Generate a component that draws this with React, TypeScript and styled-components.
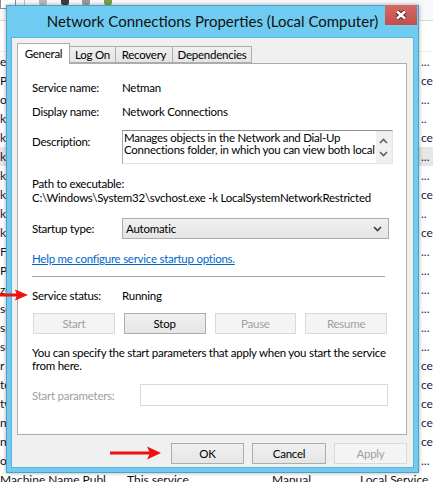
import React from 'react'
import styled, { createGlobalStyle } from 'styled-components'
// ______________________________________________________
//
const uiFont = `Lato, 'Segoe UI', 'Liberation Sans', sans-serif`

const GlobalStyle = createGlobalStyle`
  html, body {
    margin: 0;
    padding: 0;
    background: #ffffff;
  }
  body {
    font-family: ${uiFont};
  }
`
// ______________________________________________________
//
// the services list behind the dialog
type ServiceRow = { name: string; tail: string; color?: string }

const services: ServiceRow[] = [
  { name: 'eventlog', tail: '...' },
  { name: 'Peer Name Resolution', tail: 'ce' },
  { name: 'olicy Agent', tail: '...' },
  { name: 'k Access Protection', tail: '..', color: '#2a1640' },
  { name: 'k Connected Devices', tail: 'ce', color: '#2a1640' },
  { name: 'k Connections', tail: '...', color: '#2a1640' },
  { name: 'k Connectivity', tail: '...', color: '#2a1640' },
  { name: 'k List Service', tail: 'ce', color: '#2a1640' },
  { name: 'k Location Awareness', tail: '..', color: '#2a1640' },
  { name: 'k Store Interface', tail: 'ce', color: '#2a1640' },
  { name: 'Files', tail: '...', color: '#2a1640' },
  { name: 'Plug and Play', tail: '...' },
  { name: 'ze', tail: '...' },
  { name: 'service', tail: '...' },
  { name: 'spooler', tail: '...' },
  { name: 'support', tail: '...' },
  { name: 'r Control Panel', tail: 'ce' },
  { name: 'tection', tail: 'ce' },
  { name: 'tworks', tail: 'ce' },
  { name: 'nistrator', tail: 'ce' },
  { name: 'nistrator Manager', tail: 'ce' },
  { name: 'on Manager', tail: '...' },
]

const Desktop = styled.div`
  position: relative;
  width: 433px;
  height: 482px;
  overflow: hidden;
  background: #ffffff;
  font-size: 11.5px;
  letter-spacing: -0.25px;
  color: #000000;
`

const Toolbar = styled.div`
  display: flex;
  align-items: flex-start;
  height: 20px;
  border-bottom: 1px solid #d9d9d9;
  background: #f7f8f9;
`

const ToolBox = styled.span`
  width: 14px;
  height: 12px;
  margin-top: -5px;
  border: 1px solid #8e8e8e;
  background: #ffffff;
`

const ToolSep = styled.span`
  width: 1px;
  height: 7px;
  margin-left: 8px;
  background: #bcbcbc;
`

const ToolIcon = styled.span<{ $color: string; $left: number }>`
  width: 8px;
  height: 8px;
  margin-top: -3px;
  margin-left: ${p => p.$left}px;
  background: ${p => p.$color};
  border-radius: 2px;
`

const ListHeader = styled.div`
  height: 30px;
  border-bottom: 1px solid #eeeeee;
`

const Row = styled.div<{ $selected?: boolean }>`
  display: grid;
  grid-template-columns: 127px 145px 88px 61px 1fr;
  align-items: center;
  height: 19px;
  white-space: nowrap;
  font-size: 12px;
  letter-spacing: 0;
  background: ${p => (p.$selected ? '#e6e6e6' : 'transparent')};
`

const Cell = styled.span<{ $color?: string }>`
  color: ${p => p.$color || '#111111'};
  line-height: 19px;
`
// ______________________________________________________
//
// dialog frame
const Dialog = styled.div`
  position: absolute;
  top: 5px;
  left: 6px;
  width: 413px;
  height: 468px;
  box-sizing: border-box;
  display: flex;
  flex-direction: column;
  background: #6fccf0;
  border: 1px solid #4f9fc6;
  box-shadow: 0 0 4px rgba(0, 0, 0, 0.35);
`

const TitleBar = styled.div`
  display: grid;
  grid-template-columns: 1fr auto 1fr;
  align-items: start;
  height: 32px;
`

const Title = styled.div`
  grid-column: 2;
  margin-top: 5px;
  font-size: 15px;
  letter-spacing: 0;
  line-height: 20px;
  color: #111111;
  white-space: nowrap;
`

const CloseButton = styled.div`
  grid-column: 3;
  justify-self: end;
  display: flex;
  align-items: center;
  justify-content: center;
  width: 32px;
  height: 20px;
  margin-top: -1px;
  margin-right: 1px;
  background: linear-gradient(#d66a66, #c44d49);
`

const Client = styled.div`
  flex: 1;
  display: flex;
  flex-direction: column;
  margin: 0 5px 5px;
  padding: 5px 6px 0 5px;
  background: #f0f0f0;
  box-shadow: 0 0 0 1px #5db4da;
`
// ______________________________________________________
//
// tabs
const TabStrip = styled.div`
  display: flex;
  align-items: flex-end;
  height: 20px;
  position: relative;
  z-index: 1;
`

const Tab = styled.div<{ $active?: boolean; $width: number }>`
  box-sizing: border-box;
  width: ${p => p.$width}px;
  height: ${p => (p.$active ? 21 : 17)}px;
  margin-bottom: ${p => (p.$active ? -1 : 0)}px;
  margin-left: -1px;
  padding-top: ${p => (p.$active ? 2 : 0)}px;
  border: 1px solid #acacac;
  border-bottom: ${p => (p.$active ? 'none' : '1px solid #acacac')};
  background: ${p => (p.$active ? '#ffffff' : 'linear-gradient(#f0f0f0, #e5e5e5)')};
  text-align: center;
  line-height: 15px;
  color: #000000;
  &:first-child {
    margin-left: 0;
  }
`

const TabPanel = styled.div`
  box-sizing: border-box;
  display: flex;
  flex-direction: column;
  height: 372px;
  padding: 0 18px 0 14px;
  background: #ffffff;
  border: 1px solid #acacac;
`

const FieldRow = styled.div<{ $gap: number; $label?: number; $align?: string }>`
  display: grid;
  grid-template-columns: ${p => p.$label || 90}px 1fr;
  align-items: ${p => p.$align || 'center'};
  margin-top: ${p => p.$gap}px;
  line-height: 15px;
`

const Label = styled.span<{ $disabled?: boolean; $pad?: number }>`
  padding-top: ${p => p.$pad || 0}px;
  color: ${p => (p.$disabled ? '#a0a0a0' : '#000000')};
`

const TextBlock = styled.div<{ $gap: number; $line: number }>`
  margin-top: ${p => p.$gap}px;
  line-height: ${p => p.$line}px;
  white-space: nowrap;
`

const DescriptionBox = styled.div`
  display: flex;
  height: 34px;
  box-sizing: border-box;
  border: 1px solid #e3e3e3;
  border-top-color: #8f8f8f;
  border-left-color: #a9a9a9;
  background: #ffffff;
`

const DescriptionText = styled.div`
  flex: 1;
  height: 26px;
  padding: 1px 1px 0;
  overflow: hidden;
  line-height: 12px;
  white-space: nowrap;
`

const ScrollColumn = styled.div`
  display: flex;
  flex-direction: column;
  align-items: center;
  justify-content: space-around;
  width: 16px;
  padding: 3px 0;
  background: #f0f0f0;
`

const Select = styled.div`
  display: flex;
  align-items: center;
  justify-content: space-between;
  height: 21px;
  box-sizing: border-box;
  padding: 0 6px 0 3px;
  margin-right: -1px;
  border: 1px solid #acacac;
  background: linear-gradient(#f0f0f0, #e5e5e5);
`

const HelpLink = styled.a`
  align-self: flex-start;
  margin-top: 12px;
  line-height: 15px;
  color: #0066cc;
  text-decoration: underline;
  cursor: pointer;
`

const Separator = styled.div`
  height: 1px;
  margin: 10px 3px 0 0;
  background: #a0a0a0;
`

const ControlButtons = styled.div`
  display: grid;
  grid-template-columns: repeat(4, 1fr);
  gap: 9px;
  margin: 10px 1px 0 1px;
`

const PushButton = styled.div<{ $disabled?: boolean; $width?: number }>`
  box-sizing: border-box;
  display: flex;
  align-items: center;
  justify-content: center;
  ${p => (p.$width ? `width: ${p.$width}px;` : '')}
  height: 21px;
  border: 1px solid ${p => (p.$disabled ? '#d9d9d9' : '#acacac')};
  background: ${p => (p.$disabled ? '#f4f4f4' : 'linear-gradient(#f0f0f0, #e5e5e5)')};
  color: ${p => (p.$disabled ? '#a0a0a0' : '#000000')};
`

const ParamInput = styled.div`
  height: 22px;
  box-sizing: border-box;
  border: 1px solid #d9d9d9;
  background: #ffffff;
`

const DialogButtons = styled.div`
  display: flex;
  justify-content: flex-end;
  gap: 8px;
  margin-top: 8px;
`
// ______________________________________________________
//
// red annotation arrows drawn on top of the screenshot
const Arrow = styled.svg<{ $x: number; $y: number }>`
  position: absolute;
  left: ${p => p.$x}px;
  top: ${p => p.$y}px;
`

const CloseGlyph: React.FC = () => (
  <svg width="14" height="10" viewBox="0 0 14 10">
    <path d="M3 1.5 L11 8.5 M11 1.5 L3 8.5" stroke="#4a2220" strokeWidth="4.4" />
    <path d="M3 1.5 L11 8.5 M11 1.5 L3 8.5" stroke="#ffffff" strokeWidth="2.6" />
  </svg>
)

const Chevron: React.FC<{ up?: boolean; color?: string }> = ({ up, color }) => (
  <svg width="9" height="6" viewBox="0 0 9 6">
    <path
      d={up ? 'M1 5 L4.5 1.5 L8 5' : 'M1 1 L4.5 4.5 L8 1'}
      stroke={color || '#606060'}
      strokeWidth="1.6"
      fill="none"
    />
  </svg>
)

const tabs = [
  { label: 'General', width: 53, active: true },
  { label: 'Log On', width: 47 },
  { label: 'Recovery', width: 58 },
  { label: 'Dependencies', width: 80 },
]
// ______________________________________________________
//
const App: React.FC = () => (
  <Desktop>
    <GlobalStyle />
    <Toolbar>
      <ToolBox />
      <ToolSep />
      <ToolIcon $left={14} $color="#b8b8b8" />
      <ToolIcon $left={14} $color="#3c3c3c" />
      <ToolIcon $left={13} $color="#9a9a9a" />
      <ToolIcon $left={14} $color="#7aa04a" />
    </Toolbar>
    <ListHeader />
    {services.map((s, i) => (
      <Row key={i} $selected={i === 5}>
        <Cell $color={s.color}>{s.name}</Cell>
        <Cell />
        <Cell />
        <Cell />
        <Cell $color="#20204a">{s.tail}</Cell>
      </Row>
    ))}
    <Row>
      <Cell>Machine Name Publ...</Cell>
      <Cell>This service ...</Cell>
      <Cell>Manual</Cell>
      <Cell>Local Service</Cell>
      <Cell />
    </Row>

    <Dialog>
      <TitleBar>
        <Title>Network Connections Properties (Local Computer)</Title>
        <CloseButton>
          <CloseGlyph />
        </CloseButton>
      </TitleBar>
      <Client>
        <TabStrip>
          {tabs.map(t => (
            <Tab key={t.label} $active={t.active} $width={t.width}>
              {t.label}
            </Tab>
          ))}
        </TabStrip>
        <TabPanel>
          <FieldRow $gap={16}>
            <Label>Service name:</Label>
            <span>Netman</span>
          </FieldRow>
          <FieldRow $gap={9}>
            <Label>Display name:</Label>
            <span>Network Connections</span>
          </FieldRow>
          <FieldRow $gap={11} $align="start">
            <Label $pad={4}>Description:</Label>
            <DescriptionBox>
              <DescriptionText>
                Manages objects in the Network and Dial-Up
                <br />
                Connections folder, in which you can view both local
              </DescriptionText>
              <ScrollColumn>
                <Chevron up />
                <Chevron />
              </ScrollColumn>
            </DescriptionBox>
          </FieldRow>
          <TextBlock $gap={13} $line={14}>
            Path to executable:
            <br />
            {'C:\\Windows\\System32\\svchost.exe -k LocalSystemNetworkRestricted'}
          </TextBlock>
          <FieldRow $gap={13}>
            <Label>Startup type:</Label>
            <Select>
              <span>Automatic</span>
              <Chevron color="#3c3c3c" />
            </Select>
          </FieldRow>
          <HelpLink>Help me configure service startup options.</HelpLink>
          <Separator />
          <FieldRow $gap={11}>
            <Label>Service status:</Label>
            <span>Running</span>
          </FieldRow>
          <ControlButtons>
            <PushButton $disabled>Start</PushButton>
            <PushButton>Stop</PushButton>
            <PushButton $disabled>Pause</PushButton>
            <PushButton $disabled>Resume</PushButton>
          </ControlButtons>
          <TextBlock $gap={12} $line={13}>
            You can specify the start parameters that apply when you start the service
            <br />
            from here.
          </TextBlock>
          <FieldRow $gap={12} $label={108}>
            <Label $disabled>Start parameters:</Label>
            <ParamInput />
          </FieldRow>
        </TabPanel>
        <DialogButtons>
          <PushButton $width={73}>OK</PushButton>
          <PushButton $width={74}>Cancel</PushButton>
          <PushButton $width={73} $disabled>
            Apply
          </PushButton>
        </DialogButtons>
      </Client>
    </Dialog>

    <Arrow $x={0} $y={289} width="28" height="12" viewBox="0 0 28 12">
      <rect x="0" y="4.5" width="17" height="3" fill="#f01010" />
      <polygon points="15,0.5 28,6 15,11.5 17,6" fill="#f01010" />
    </Arrow>
    <Arrow $x={110} $y={446} width="51" height="14" viewBox="0 0 51 14">
      <rect x="0" y="5.5" width="40" height="3" fill="#f01010" />
      <polygon points="37,0.5 51,7 37,13.5 40,7" fill="#f01010" />
    </Arrow>
  </Desktop>
)
// ______________________________________________________
//
export default App
